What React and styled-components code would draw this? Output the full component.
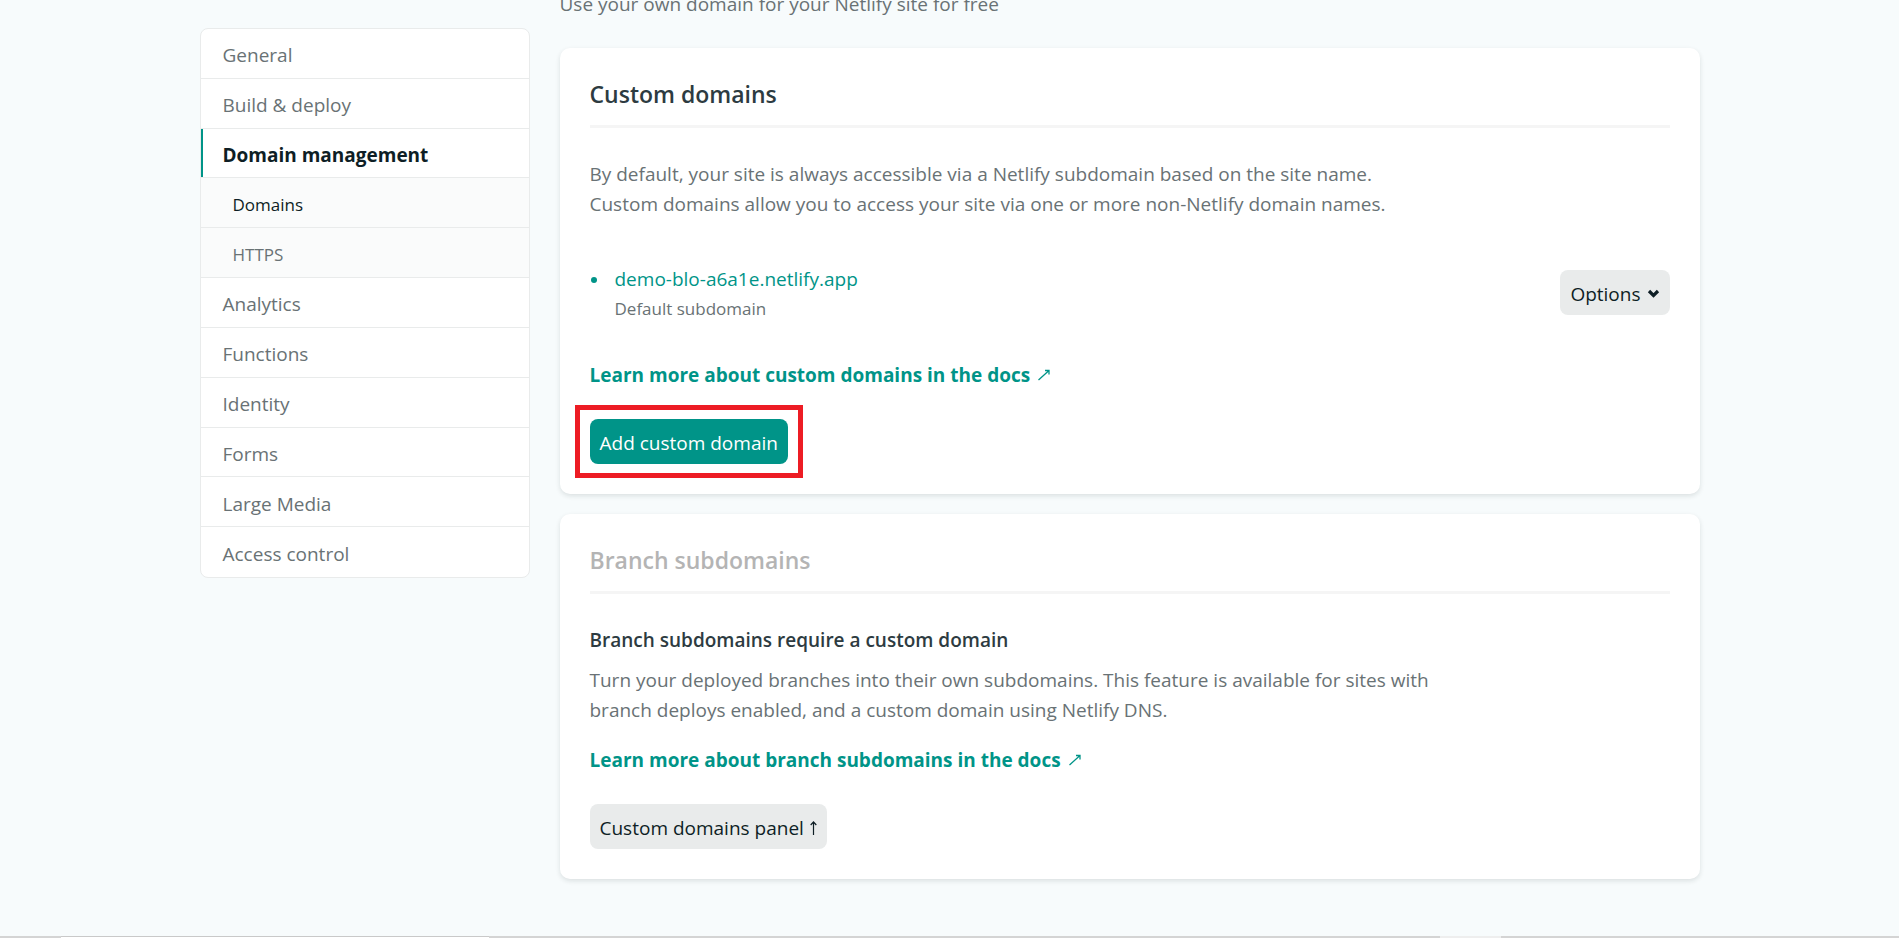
import React from 'react';
import styled, { createGlobalStyle, css } from 'styled-components';

const color = {
  page: '#f7fbfc',
  line: '#e9ebeb',
  rule: '#f5f5f5',
  text: '#697275',
  dark: '#0e1e25',
  heading: '#2d3b41',
  muted: '#b4b4b4',
  teal: '#009488',
  highlight: '#ed1c24',
};

const GlobalStyle = createGlobalStyle`
  *, *::before, *::after { box-sizing: border-box; }
  body {
    margin: 0;
    background: ${color.page};
    color: ${color.text};
    font-family: 'Segoe UI', 'Open Sans', 'Noto Sans', sans-serif;
    font-size: 19px;
    line-height: 30px;
  }
  h2, h3, p, ul { margin: 0; padding: 0; }
  ul { list-style: none; }
  a { color: inherit; text-decoration: none; }
  button { font: inherit; border: 0; cursor: pointer; }
`;

const Page = styled.div`
  display: flex;
  flex-direction: column;
  min-height: 100vh;
  overflow: hidden;
`;

const Layout = styled.div`
  flex: 1;
  display: flex;
  align-items: flex-start;
  gap: 30px;
  width: 100%;
  max-width: 1500px;
  margin: 0 auto;
`;

const Sidebar = styled.nav`
  flex: 0 0 22%;
  margin-top: 28px;
`;

const NavList = styled.ul`
  display: grid;
  grid-auto-rows: 1fr;
  min-height: 550px;
  background: #fff;
  border: 1px solid ${color.line};
  border-radius: 8px;
  overflow: hidden;
`;

const NavItem = styled.li`
  display: flex;
  border-bottom: 1px solid ${color.line};
  &:last-child { border-bottom: 0; }
`;

const NavLink = styled.a`
  flex: 1;
  display: flex;
  align-items: center;
  padding: 4px 22px 0;

  ${({ $current }) => $current && css`
    color: ${color.dark};
    font-weight: 700;
    border-left: 2px solid ${color.teal};
    padding-left: 20px;
  `}
  ${({ $sub }) => $sub && css`
    padding-left: 32px;
    background: #fafbfb;
    font-size: 17px;
  `}
  ${({ $open }) => $open && css`color: ${color.dark};`}
`;

const Main = styled.main`
  flex: 1;
  min-width: 0;
  display: flex;
  flex-direction: column;
  gap: 20px;
  margin-top: -11px;
  padding-bottom: 40px;
`;

const Intro = styled.p`
  margin-bottom: 9px;
`;

const Card = styled.section`
  display: flex;
  flex-direction: column;
  align-items: flex-start;
  padding: 30px;
  background: #fff;
  border-radius: 10px;
  box-shadow: 0 2px 5px rgba(14, 30, 37, 0.12);
`;

const CardTitle = styled.h2`
  align-self: stretch;
  margin-bottom: 31px;
  padding-bottom: 15px;
  border-bottom: 3px solid ${color.rule};
  color: ${({ $muted }) => ($muted ? color.muted : color.heading)};
  font-size: 23px;
  font-weight: 600;
  line-height: 32px;
`;

const SubTitle = styled.h3`
  margin-bottom: 10px;
  color: ${color.heading};
  font-size: 19px;
  font-weight: 600;
`;

const Text = styled.p`
  max-width: 860px;
`;

const DomainList = styled.ul`
  align-self: stretch;
  margin: 45px 0 16px;
`;

const Domain = styled.li`
  display: flex;
  align-items: flex-start;
  justify-content: space-between;
  > button { margin-top: 6px; }
`;

const DomainInfo = styled.div`
  position: relative;
  padding-left: 25px;
  &::before {
    content: '';
    position: absolute;
    left: 1px;
    top: 13px;
    width: 6px;
    height: 6px;
    border-radius: 50%;
    background: ${color.teal};
  }
`;

const DomainLink = styled.a`
  color: ${color.teal};
`;

const Note = styled.p`
  font-size: 17px;
`;

const DocsLink = styled.a`
  display: flex;
  align-items: center;
  gap: 8px;
  margin: 20px 0 29px;
  color: ${color.teal};
  font-weight: 700;
`;

const Button = styled.button`
  display: flex;
  align-items: center;
  gap: 6px;
  min-height: 45px;
  padding: 2px 10px 0;
  border-radius: 8px;
  background: ${({ $primary }) => ($primary ? color.teal : '#e9ebeb')};
  color: ${({ $primary }) => ($primary ? '#fff' : color.dark)};
`;

const Highlight = styled.div`
  position: relative;
  &::after {
    content: '';
    position: absolute;
    inset: -14px -15px;
    border: 5px solid ${color.highlight};
    pointer-events: none;
  }
`;

const Taskbar = styled.div`
  display: grid;
  grid-template-columns: 61px 428px 1fr 61px 398px;
  height: 2px;
  background: #d4d4d4;
`;

const TaskbarSearch = styled.div`
  grid-column: 2;
  background: #fff;
  border-top: 1px solid #c9c9c9;
`;

const TaskbarActive = styled.div`
  grid-column: 4;
  background: #eeeeee;
`;

const ExternalIcon = () => (
  <svg width="12" height="12" viewBox="0 0 12 12" fill="none" stroke="currentColor" aria-hidden="true">
    <path d="M0.5 11 L11 1.5 M7 1.5 H11 V5.5" strokeWidth="1.3" />
  </svg>
);

const ChevronIcon = () => (
  <svg width="13" height="9" viewBox="0 0 13 9" fill="none" stroke="currentColor" aria-hidden="true">
    <path d="M2 2 L6.5 6.5 L11 2" strokeWidth="3.2" />
  </svg>
);

const UpIcon = () => (
  <svg width="7" height="14" viewBox="0 0 7 14" fill="none" stroke="currentColor" aria-hidden="true">
    <path d="M3.5 14 V1 M0.7 4 L3.5 1 L6.3 4" strokeWidth="1.2" />
  </svg>
);

const navItems = [
  { label: 'General' },
  { label: 'Build & deploy' },
  { label: 'Domain management', current: true },
  { label: 'Domains', sub: true, open: true },
  { label: 'HTTPS', sub: true },
  { label: 'Analytics' },
  { label: 'Functions' },
  { label: 'Identity' },
  { label: 'Forms' },
  { label: 'Large Media' },
  { label: 'Access control' },
];

export default function App() {
  return (
    <>
      <GlobalStyle />
      <Page>
        <Layout>
          <Sidebar aria-label="Site settings">
            <NavList>
              {navItems.map(({ label, current, sub, open }) => (
                <NavItem key={label}>
                  <NavLink href="#" $current={current} $sub={sub} $open={open}>{label}</NavLink>
                </NavItem>
              ))}
            </NavList>
          </Sidebar>
          <Main>
            <Intro>Use your own domain for your Netlify site for free</Intro>
            <Card>
              <CardTitle>Custom domains</CardTitle>
              <Text>
                By default, your site is always accessible via a Netlify subdomain based on the site name.
                <br />
                Custom domains allow you to access your site via one or more non-Netlify domain names.
              </Text>
              <DomainList>
                <Domain>
                  <DomainInfo>
                    <DomainLink href="#">demo-blo-a6a1e.netlify.app</DomainLink>
                    <Note>Default subdomain</Note>
                  </DomainInfo>
                  <Button type="button">Options <ChevronIcon /></Button>
                </Domain>
              </DomainList>
              <DocsLink href="#">Learn more about custom domains in the docs <ExternalIcon /></DocsLink>
              <Highlight>
                <Button type="button" $primary>Add custom domain</Button>
              </Highlight>
            </Card>
            <Card>
              <CardTitle $muted>Branch subdomains</CardTitle>
              <SubTitle>Branch subdomains require a custom domain</SubTitle>
              <Text>
                Turn your deployed branches into their own subdomains. This feature is available for sites with
                <br />
                branch deploys enabled, and a custom domain using Netlify DNS.
              </Text>
              <DocsLink href="#">Learn more about branch subdomains in the docs <ExternalIcon /></DocsLink>
              <Button type="button">Custom domains panel <UpIcon /></Button>
            </Card>
          </Main>
        </Layout>
        <Taskbar>
          <TaskbarSearch />
          <TaskbarActive />
        </Taskbar>
      </Page>
    </>
  );
}
